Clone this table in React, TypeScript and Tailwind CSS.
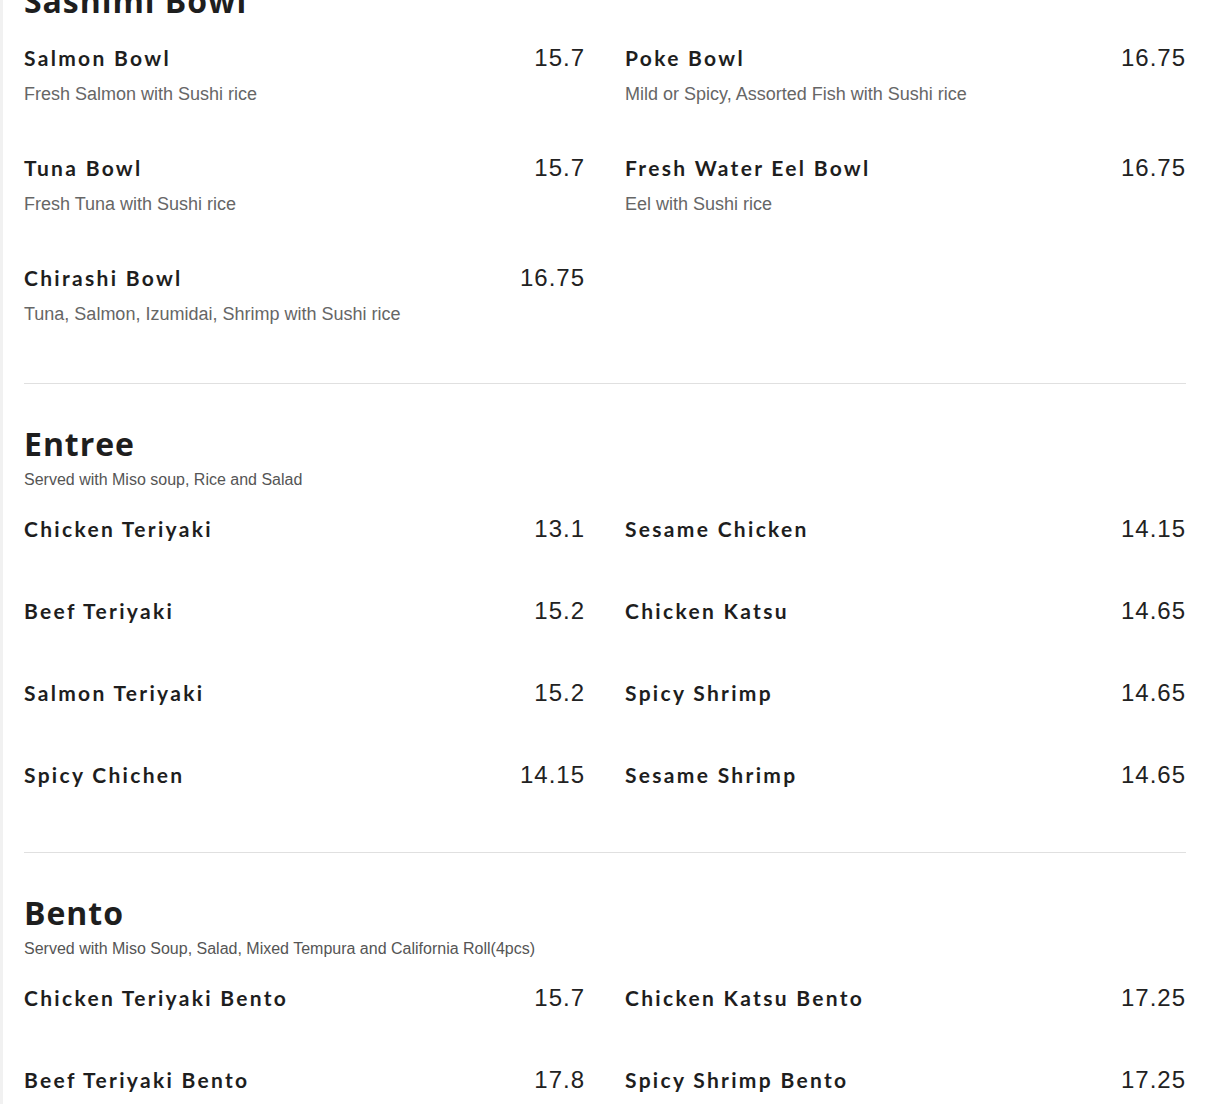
type Item = { name: string; price: string; desc?: string };
type Section = { title: string; note?: string; items: Item[] };

const sections: Section[] = [
  {
    title: "Sashimi Bowl",
    items: [
      { name: "Salmon Bowl", price: "15.7", desc: "Fresh Salmon with Sushi rice" },
      { name: "Poke Bowl", price: "16.75", desc: "Mild or Spicy, Assorted Fish with Sushi rice" },
      { name: "Tuna Bowl", price: "15.7", desc: "Fresh Tuna with Sushi rice" },
      { name: "Fresh Water Eel Bowl", price: "16.75", desc: "Eel with Sushi rice" },
      { name: "Chirashi Bowl", price: "16.75", desc: "Tuna, Salmon, Izumidai, Shrimp with Sushi rice" },
    ],
  },
  {
    title: "Entree",
    note: "Served with Miso soup, Rice and Salad",
    items: [
      { name: "Chicken Teriyaki", price: "13.1" },
      { name: "Sesame Chicken", price: "14.15" },
      { name: "Beef Teriyaki", price: "15.2" },
      { name: "Chicken Katsu", price: "14.65" },
      { name: "Salmon Teriyaki", price: "15.2" },
      { name: "Spicy Shrimp", price: "14.65" },
      { name: "Spicy Chichen", price: "14.15" },
      { name: "Sesame Shrimp", price: "14.65" },
    ],
  },
  {
    title: "Bento",
    note: "Served with Miso Soup, Salad, Mixed Tempura and California Roll(4pcs)",
    items: [
      { name: "Chicken Teriyaki Bento", price: "15.7" },
      { name: "Chicken Katsu Bento", price: "17.25" },
      { name: "Beef Teriyaki Bento", price: "17.8" },
      { name: "Spicy Shrimp Bento", price: "17.25" },
    ],
  },
];

function MenuItem({ item }: { item: Item }) {
  return (
    <div className={item.desc ? "pb-[47px]" : "pb-[52px]"}>
      <div className="flex h-[30px] items-center justify-between">
        <h3 className="font-['Lato',sans-serif] text-[21px] font-bold tracking-[0.11em] text-[#1e1e1e]">
          {item.name}
        </h3>
        <span className="font-['Liberation_Sans',Arial,sans-serif] text-[24px] tracking-[1px] text-[#222]">
          {item.price}
        </span>
      </div>
      {item.desc && (
        <p className="mt-[9px] font-['Liberation_Sans',Arial,sans-serif] text-[18px] leading-6 text-[#666]">
          {item.desc}
        </p>
      )}
    </div>
  );
}

export default function App() {
  return (
    <div className="min-h-screen overflow-hidden border-l-[3px] border-[#f1f1f1] bg-white">
      <div className="-mt-[59px] pl-[21px] pr-6">
        {sections.map((s, i) => (
          <section
            key={s.title}
            className={`pt-10 pb-[10px] ${i < sections.length - 1 ? "border-b border-[#e0e0e0]" : ""}`}
          >
            <h2 className="font-['Open_Sans',sans-serif] text-[32px] leading-10 font-bold tracking-[0.03em] text-[#1e1e1e]">
              {s.title}
            </h2>
            {s.note && (
              <p className="mt-1 font-['Liberation_Sans',Arial,sans-serif] text-[16px] leading-6 text-[#555]">
                {s.note}
              </p>
            )}
            <div className="mt-[22px] grid grid-cols-2 gap-x-10">
              {s.items.map((it) => (
                <MenuItem key={it.name} item={it} />
              ))}
            </div>
          </section>
        ))}
      </div>
    </div>
  );
}
